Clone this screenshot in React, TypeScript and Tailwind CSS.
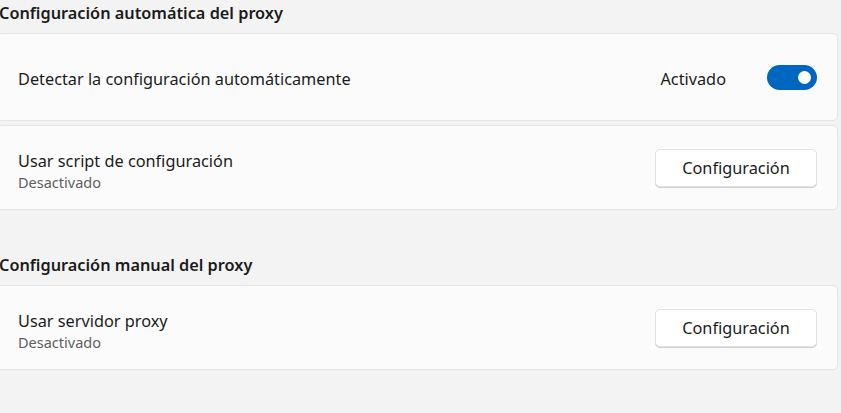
export default function App() {
  return (
    <div
      className="h-[413px] w-full overflow-hidden bg-[#f3f3f3] text-[#1b1b1b]"
      style={{ fontFamily: '"Segoe UI", "Noto Sans", "Open Sans", sans-serif' }}
    >
      <div className="-ml-[3px] w-[841px]">
        {/* Automatic proxy */}
        <h2 className="h-[33px] pl-[2px] text-[16.3px] font-semibold leading-[26px]">
          Configuración automática del proxy
        </h2>

        <div className="flex h-[88px] items-center justify-between rounded-[5px] border border-[#e5e5e5] bg-[#fbfbfb] pl-[20px] pr-[20px]">
          <span className="pt-[4px] text-[16.3px]">Detectar la configuración automáticamente</span>
          <div className="flex items-center gap-[41px]">
            <span className="pt-[4px] text-[16.3px]">Activado</span>
            <Toggle />
          </div>
        </div>

        <SettingRow title="Usar script de configuración" className="mt-[4px]" />

        {/* Manual proxy */}
        <h2 className="mt-[42px] mb-[7px] h-[26px] pl-[2px] text-[16.3px] font-semibold leading-[26px]">
          Configuración manual del proxy
        </h2>

        <SettingRow title="Usar servidor proxy" />
      </div>
    </div>
  );
}

function Toggle() {
  return (
    <div className="flex h-[25px] w-[50px] items-center justify-end rounded-full bg-[#0067c0] pr-[6px]">
      <div className="h-[13px] w-[13px] rounded-full bg-white" />
    </div>
  );
}

function SettingRow({ title, className = "" }: { title: string; className?: string }) {
  return (
    <div
      className={`flex h-[85px] items-center justify-between rounded-[5px] border border-[#e5e5e5] bg-[#fbfbfb] pl-[20px] pr-[20px] ${className}`}
    >
      <div className="flex flex-col pt-[6px]">
        <span className="text-[16.3px] leading-[22px]">{title}</span>
        <span className="text-[14.5px] leading-[20px] text-[#5f5f5f]">Desactivado</span>
      </div>
      <button className="h-[38px] w-[162px] rounded-[5px] border border-[#e3e3e3] bg-white pt-[2px] text-[16.3px] shadow-[0_1px_0_#d0d0d0]">
        Configuración
      </button>
    </div>
  );
}
